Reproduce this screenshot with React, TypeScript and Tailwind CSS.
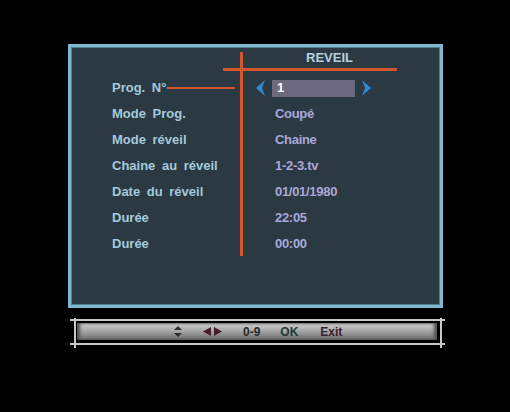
import React from "react";

const rows: { label: string; value: string }[] = [
  { label: "Mode Prog.", value: "Coupé" },
  { label: "Mode réveil", value: "Chaine" },
  { label: "Chaine au réveil", value: "1-2-3.tv" },
  { label: "Date du réveil", value: "01/01/1980" },
  { label: "Durée", value: "22:05" },
  { label: "Durée", value: "00:00" },
];

const ArrowLeft = () => (
  <svg width="9" height="16" viewBox="0 0 9 16" className="block">
    <polygon points="9,0 0,8 9,16 6,8" fill="#2f8ad2" />
  </svg>
);

const ArrowRight = () => (
  <svg width="9" height="16" viewBox="0 0 9 16" className="block">
    <polygon points="0,0 9,8 0,16 3,8" fill="#2f8ad2" />
  </svg>
);

const App: React.FC = () => {
  return (
    <div
      className="w-[510px] h-[412px] bg-black pt-[44px] pl-[68px] overflow-hidden"
      style={{ fontFamily: '"Liberation Sans", Arial, sans-serif' }}
    >
      {/* Main panel */}
      <div className="relative w-[375px] h-[264px] border-[3px] border-[#80b9cb] bg-[#2b3943] shadow-[inset_0_0_0_1px_#4e7f90]">
        {/* Red guide lines */}
        <div className="absolute left-[169px] top-[5px] w-[3px] h-[204px] bg-[#d2552c]" />
        <div className="absolute left-[152px] top-[21px] w-[174px] h-[3px] bg-[#d2552c]" />
        <div className="absolute left-[96px] top-[40px] w-[68px] h-[2px] bg-[#d2552c]" />

        {/* Title */}
        <div className="h-[28px] pt-[5px] pl-[235px] leading-[12px] text-[13px] font-bold text-[#b6d0dc]">
          REVEIL
        </div>

        {/* Prog. N° row */}
        <div className="h-[26px] flex items-center pl-[41px]">
          <div className="w-[144px] text-[13px] font-bold text-[#a3cadc] [word-spacing:3px]">
            Prog. N°
          </div>
          <ArrowLeft />
          <div className="ml-[7px] w-[83px] h-[17px] bg-[#6d6a7f] pl-[5px] flex items-center text-[13px] font-bold text-white">
            1
          </div>
          <div className="ml-[7px]">
            <ArrowRight />
          </div>
        </div>

        {/* Other rows */}
        {rows.map((row, i) => (
          <div key={i} className="h-[26px] flex items-center pl-[41px]">
            <div className="w-[163px] text-[13px] font-bold text-[#a3cadc] [word-spacing:3px]">
              {row.label}
            </div>
            <div className="text-[13px] font-bold text-[#aba8d8] tracking-[-0.3px]">
              {row.value}
            </div>
          </div>
        ))}
      </div>

      {/* Footer key bar */}
      <div className="relative mt-[8px] ml-[2px] w-[375px] h-[34px] pt-[7px] pl-[7px] pr-[8px]">
        <div className="absolute left-0 top-[3px] w-[375px] h-[2px] bg-[#c9c9c9]" />
        <div className="absolute left-0 top-[27px] w-[375px] h-[2px] bg-[#c9c9c9]" />
        <div className="absolute left-[4px] top-[2px] w-[2px] h-[30px] bg-[#c9c9c9]" />
        <div className="absolute left-[370px] top-[2px] w-[2px] h-[30px] bg-[#c9c9c9]" />

        <div className="h-[17px] rounded-[2px] bg-gradient-to-b from-[#d2d2d2] via-[#a3a3a3] to-[#6c6c6c] shadow-[inset_3px_0_3px_#555,inset_-3px_0_3px_#555] flex items-center pl-[97px] text-[12px] font-bold leading-none">
          <svg width="8" height="11" viewBox="0 0 8 11" className="block">
            <polygon points="4,0 8,4 0,4" fill="#2e2e2e" />
            <polygon points="0,7 8,7 4,11" fill="#2e2e2e" />
          </svg>
          <svg width="19" height="9" viewBox="0 0 19 9" className="block ml-[21px]">
            <polygon points="0,4.5 8,0 8,9" fill="#4a1d2a" />
            <polygon points="11,0 19,4.5 11,9" fill="#4a1d2a" />
          </svg>
          <span className="ml-[21px] text-[#2a2a2a]">0-9</span>
          <span className="ml-[20px] text-[#1d3a30]">OK</span>
          <span className="ml-[22px] text-[#3a2030]">Exit</span>
        </div>
      </div>
    </div>
  );
};

export default App;
